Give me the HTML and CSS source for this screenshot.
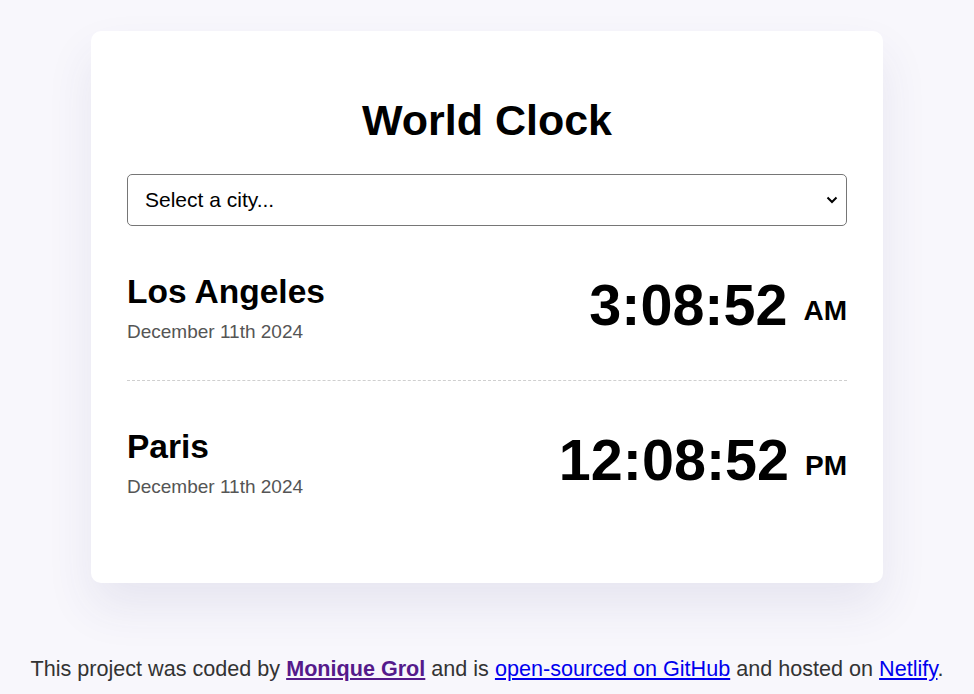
FILE: index.html
```html
<!DOCTYPE html>
<html lang="en">
<head>
<meta charset="utf-8">
<title>World Clock</title>
<link rel="stylesheet" href="styles.css">
</head>
<body>
<div class="page">
  <main class="card">
    <h1 class="title">World Clock</h1>
    <div class="select-wrap">
      <select class="city-select">
        <option>Select a city...</option>
      </select>
      <svg class="chevron" width="12" height="8" viewBox="0 0 12 8" aria-hidden="true"><path d="M1.5 1.5 L6 6 L10.5 1.5" fill="none" stroke="#000" stroke-width="2"/></svg>
    </div>
    <div class="cities">
      <div class="city">
        <div class="city-info">
          <h2 class="city-name">Los Angeles</h2>
          <div class="city-date">December 11th 2024</div>
        </div>
        <div class="city-time">3:08:52 <small class="ampm">AM</small></div>
      </div>
      <div class="city city-last">
        <div class="city-info">
          <h2 class="city-name">Paris</h2>
          <div class="city-date">December 11th 2024</div>
        </div>
        <div class="city-time">12:08:52 <small class="ampm">PM</small></div>
      </div>
    </div>
  </main>
  <footer class="footer">
    This project was coded by <a class="author" href="#">Monique Grol</a> and is <a class="link" href="#">open-sourced on GitHub</a> and hosted on <a class="link" href="#">Netlify</a>.
  </footer>
</div>
</body>
</html>
```

FILE: styles.css
```css
html, body {
  margin: 0;
  padding: 0;
}
body {
  background: #f8f7fc;
  font-family: "Liberation Sans", Arial, sans-serif;
  color: #000;
}
.page {
  padding-top: 31px;
}
.card {
  width: 720px;
  margin: 0 auto;
  background: #fff;
  border-radius: 10px;
  padding: 36px 36px 48px;
  box-shadow: 0 24px 48px rgba(60, 55, 120, 0.09);
}
.title {
  font-size: 43px;
  font-weight: 700;
  text-align: center;
  margin: 0.67em 0;
}
.select-wrap {
  position: relative;
}
.city-select {
  display: block;
  width: 100%;
  height: 52px;
  font-family: "Liberation Sans", Arial, sans-serif;
  font-size: 21px;
  color: #000;
  background: #fff;
  border: 1px solid #767676;
  border-radius: 5px;
  padding: 0 36px 0 17px;
  appearance: none;
  -webkit-appearance: none;
}
.chevron {
  position: absolute;
  right: 9px;
  top: 22px;
  width: 12px;
  height: 8px;
  pointer-events: none;
}
.city {
  display: flex;
  justify-content: space-between;
  align-items: center;
  padding: 47px 0 37px;
  border-bottom: 1px dashed #cfcfcf;
}
.city-last {
  border-bottom: none;
}
.city-name {
  font-size: 33.5px;
  font-weight: 700;
  margin: 0 0 10px;
}
.city-date {
  font-size: 19px;
  color: #555;
}
.city-time {
  font-size: 57.5px;
  font-weight: 700;
  line-height: 1;
  padding-bottom: 4px;
}
.ampm {
  font-size: 28px;
  vertical-align: 5px;
}
.footer {
  text-align: center;
  font-size: 21.6px;
  color: #333;
  margin-top: 73px;
}
.author {
  color: #551a8b;
  font-weight: 700;
}
.link {
  color: #0000ee;
}
```
